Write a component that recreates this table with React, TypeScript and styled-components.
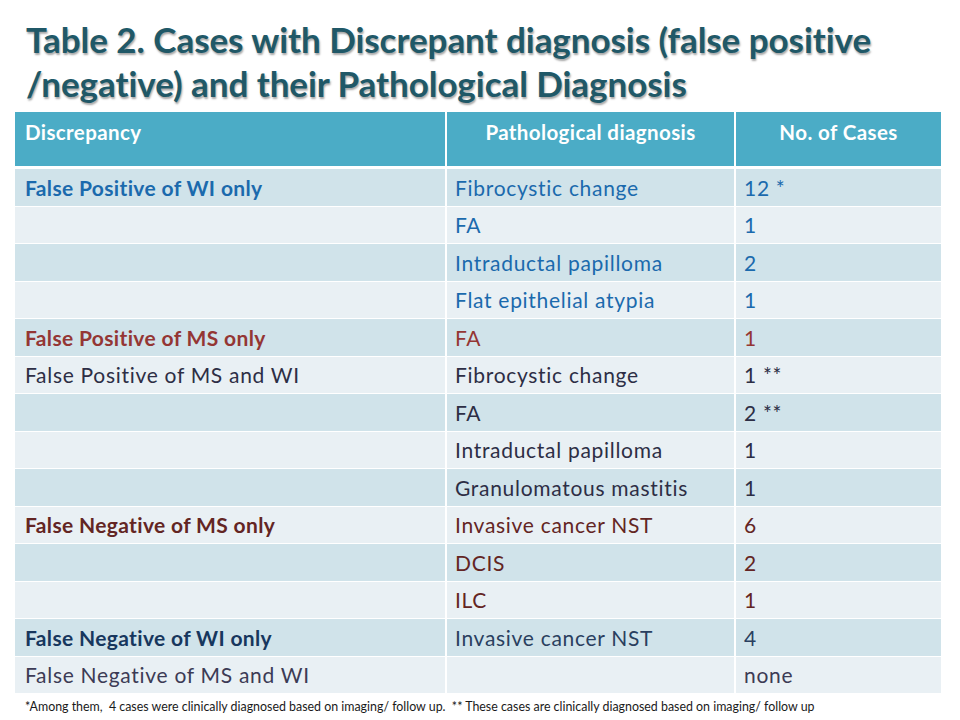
import React from "react";
import styled, { createGlobalStyle } from "styled-components";

const Global = createGlobalStyle`
  html, body { margin: 0; padding: 0; background: #ffffff; }
  body { width: 960px; height: 720px; overflow: hidden; font-family: Lato, "Open Sans", sans-serif; }
`;

const Slide = styled.div`
  width: 960px;
  height: 720px;
  box-sizing: border-box;
  padding: 17px 19px 0 15px;
  display: flex;
  flex-direction: column;
`;

const Title = styled.h1`
  margin: 0 0 7px 11px;
  font-family: Lato, "Open Sans", sans-serif;
  font-weight: 700;
  font-size: 35px;
  line-height: 44px;
  color: #205867;
  letter-spacing: -0.05px;
  text-shadow: 1px 2px 2px rgba(0, 0, 0, 0.35);
`;

const Table = styled.div`
  width: 926px;
  display: flex;
  flex-direction: column;
`;

const cols = "430px 289px 207px";

const HeadRow = styled.div`
  display: grid;
  grid-template-columns: ${cols};
  height: 54px;
  background: #4bacc6;
  border-bottom: 3px solid #ffffff;
`;

const HeadCell = styled.div<{ $align?: "left" | "center" }>`
  padding: 8px 10px 0;
  color: #ffffff;
  font-weight: 700;
  font-size: 20.5px;
  letter-spacing: 0.4px;
  line-height: 24px;
  text-align: ${(p) => p.$align ?? "left"};
  border-left: ${(p) => (p.$align === "center" ? "2px solid #ffffff" : "none")};
`;

const BodyRow = styled.div<{ $odd: boolean }>`
  display: grid;
  grid-template-columns: ${cols};
  height: 37.5px;
  box-sizing: border-box;
  background: ${(p) => (p.$odd ? "#d0e3ea" : "#e9f0f4")};
  border-bottom: 1px solid #ffffff;
`;

const Cell = styled.div<{ $color: string; $bold?: boolean; $first?: boolean }>`
  display: flex;
  align-items: center;
  padding: 0 ${(p) => (p.$first ? "10px" : "8px")};
  color: ${(p) => p.$color};
  font-weight: ${(p) => (p.$bold ? 700 : 400)};
  font-size: 21px;
  letter-spacing: ${(p) => (p.$bold ? "0.35px" : "0.7px")};
  white-space: nowrap;
  border-left: ${(p) => (p.$first ? "none" : "2px solid #ffffff")};
`;

const Footnote = styled.p`
  margin: 5px 0 0 10px;
  font-size: 12.4px;
  color: #1a1a1a;
  white-space: nowrap;
`;

type Row = { d: string; p: string; n: string; dc: string; c: string; bold?: boolean };

const BLUE = "#1b6aad";
const RED = "#943634";
const NAVY = "#2d2e45";
const MAROON = "#632523";
const DNAVY = "#17375e";
const GRAY = "#3c3b55";

const rows: Row[] = [
  { d: "False Positive of WI only", p: "Fibrocystic change", n: "12 *", dc: BLUE, c: BLUE, bold: true },
  { d: "", p: "FA", n: "1", dc: BLUE, c: BLUE },
  { d: "", p: "Intraductal papilloma", n: "2", dc: BLUE, c: BLUE },
  { d: "", p: "Flat epithelial atypia", n: "1", dc: BLUE, c: BLUE },
  { d: "False Positive of MS only", p: "FA", n: "1", dc: RED, c: RED, bold: true },
  { d: "False Positive of MS and WI", p: "Fibrocystic change", n: "1 **", dc: NAVY, c: NAVY },
  { d: "", p: "FA", n: "2 **", dc: NAVY, c: NAVY },
  { d: "", p: "Intraductal papilloma", n: "1", dc: NAVY, c: NAVY },
  { d: "", p: "Granulomatous mastitis", n: "1", dc: NAVY, c: NAVY },
  { d: "False Negative of MS only", p: "Invasive cancer NST", n: "6", dc: MAROON, c: MAROON, bold: true },
  { d: "", p: "DCIS", n: "2", dc: MAROON, c: MAROON },
  { d: "", p: "ILC", n: "1", dc: MAROON, c: MAROON },
  { d: "False Negative of WI only", p: "Invasive cancer NST", n: "4", dc: DNAVY, c: "#2a3f5f", bold: true },
  { d: "False Negative of MS and WI", p: "", n: "none", dc: GRAY, c: GRAY },
];

export default function App() {
  return (
    <>
      <Global />
      <Slide>
        <Title>
          Table 2. Cases with Discrepant diagnosis (false positive
          <br />
          /negative) and their Pathological Diagnosis
        </Title>
        <Table>
          <HeadRow>
            <HeadCell>Discrepancy</HeadCell>
            <HeadCell $align="center">Pathological diagnosis</HeadCell>
            <HeadCell $align="center">No. of Cases</HeadCell>
          </HeadRow>
          {rows.map((r, i) => (
            <BodyRow key={i} $odd={i % 2 === 0}>
              <Cell $first $color={r.dc} $bold={r.bold}>{r.d}</Cell>
              <Cell $color={r.c}>{r.p}</Cell>
              <Cell $color={r.c}>{r.n}</Cell>
            </BodyRow>
          ))}
        </Table>
        <Footnote>
          *Among them,&nbsp; 4 cases were clinically diagnosed based on imaging/ follow up.&nbsp; ** These cases are clinically diagnosed based on imaging/ follow up
        </Footnote>
      </Slide>
    </>
  );
}
